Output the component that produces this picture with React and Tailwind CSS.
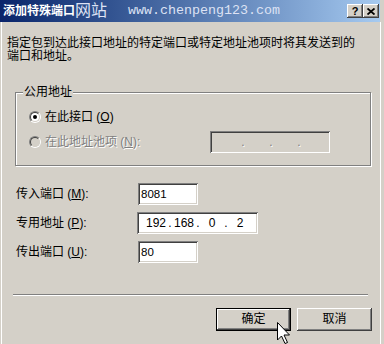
import React from 'react';

const raised =
  'shadow-[inset_-1px_-1px_0_#404040,inset_1px_1px_0_#ffffff,inset_-2px_-2px_0_#808080,inset_2px_2px_0_#d4d0c8]';
const sunken =
  'shadow-[inset_1px_1px_0_#808080,inset_-1px_-1px_0_#ffffff,inset_2px_2px_0_#404040,inset_-2px_-2px_0_#d4d0c8]';
const disabledText = 'text-[#808080] [text-shadow:1px_1px_0_#ffffff]';

function Radio({ checked, disabled }) {
  return (
    <div className="w-[12px] h-[12px] rounded-full border border-t-[#808080] border-l-[#808080] border-b-white border-r-white shrink-0">
      <div
        className={`w-full h-full rounded-full border border-t-[#404040] border-l-[#404040] border-b-[#d4d0c8] border-r-[#d4d0c8] flex items-center justify-center ${
          disabled ? 'bg-[#d4d0c8]' : 'bg-white'
        }`}
      >
        {checked && <div className="w-[4px] h-[4px] rounded-full bg-black" />}
      </div>
    </div>
  );
}

function IpField({ values, disabled, width }) {
  const parts = values || ['', '', '', ''];
  return (
    <div
      className={`h-[22px] ${sunken} ${disabled ? 'bg-[#d4d0c8]' : 'bg-white'} flex items-center pl-[7px]`}
      style={{ width }}
    >
      {parts.map((p, i) => (
        <React.Fragment key={i}>
          <span className={`w-[24px] text-center ${disabled ? disabledText : ''}`}>{p}</span>
          {i < 3 && (
            <span className={`w-[4px] text-center ${disabled ? disabledText : ''}`}>.</span>
          )}
        </React.Fragment>
      ))}
    </div>
  );
}

function FieldRow({ label, accel, children }) {
  return (
    <div className="flex items-center">
      <div className="w-[122px] ml-[9px]">
        {label} (<u>{accel}</u>):
      </div>
      {children}
    </div>
  );
}

export default function App() {
  return (
    <div
      className="w-[384px] h-[344px] overflow-hidden bg-[#d4d0c8] flex flex-col relative text-[12px] leading-[13px] text-black"
      style={{ fontFamily: '"Liberation Sans", "Noto Sans CJK SC", sans-serif' }}
    >
      {/* title bar */}
      <div className="h-[22px] w-[380px] bg-gradient-to-r from-[#0a246a] to-[#a6caf0] flex items-center relative shrink-0">
        <span className="ml-[3px] text-white font-bold text-[12px]">添加特殊端口</span>
        <span className="absolute left-[75px] top-[2px] text-[16px] leading-[18px] text-[#dde2f4]">网站</span>
        <span
          className="absolute left-[128px] top-[3px] text-[13.33px] leading-[16px] text-[#dde2f4]"
          style={{ fontFamily: '"Liberation Mono", monospace' }}
        >
          www.chenpeng123.com
        </span>
        <div className="ml-auto mr-[1px] flex">
          <div className={`w-[16px] h-[14px] bg-[#d4d0c8] ${raised} flex items-center justify-center text-[11px] font-bold leading-none`}>
            ?
          </div>
          <div className={`w-[16px] h-[14px] bg-[#d4d0c8] ${raised} flex items-center justify-center`}>
            <svg width="8" height="7" viewBox="0 0 8 7">
              <path d="M0.5 0.5 L7.5 6.5 M7.5 0.5 L0.5 6.5" stroke="#000" strokeWidth="1.8" />
            </svg>
          </div>
        </div>
      </div>

      {/* body */}
      <div className="flex-1 flex flex-col pl-[7px] shadow-[inset_1px_0_0_#d4d0c8,inset_2px_0_0_#ffffff,inset_-3px_0_0_#d4d0c8,inset_-4px_0_0_#ffffff]">
        <p className="mt-[15px] w-[356px]">
          指定包到达此接口地址的特定端口或特定地址池项时将其发送到的端口和地址。
        </p>

        {/* group box */}
        <div className="relative mt-[29px] ml-[8px] w-[356px] h-[74px] border border-[#808080] shadow-[inset_1px_1px_0_#ffffff,1px_1px_0_#ffffff] pl-[13px] pt-[16px] flex flex-col">
          <span className="absolute left-[7px] -top-[7px] bg-[#d4d0c8] px-[1px]">公用地址</span>
          <div className="flex items-center h-[16px]">
            <Radio checked />
            <span className="ml-[4px]">
              在此接口 (<u>O</u>)
            </span>
          </div>
          <div className="flex items-center h-[22px] mt-[6px]">
            <Radio disabled />
            <span className={`ml-[4px] w-[165px] ${disabledText}`}>
              在此地址池项 (<u>N</u>):
            </span>
            <IpField disabled width={120} />
          </div>
        </div>

        {/* port fields */}
        <div className="flex flex-col gap-[7px] mt-[17px]">
          <FieldRow label="传入端口" accel="M">
            <div className={`w-[60px] h-[22px] bg-white ${sunken} flex items-center pl-[3px] text-[11.5px]`}>8081</div>
          </FieldRow>
          <FieldRow label="专用地址" accel="P">
            <div className="-ml-[1px] text-[12px]">
              <IpField values={['192', '168', '0', '2']} width={121} />
            </div>
          </FieldRow>
          <FieldRow label="传出端口" accel="U">
            <div className={`w-[60px] h-[22px] bg-white ${sunken} flex items-center pl-[3px] text-[11.5px]`}>80</div>
          </FieldRow>
        </div>

        {/* separator */}
        <div className="mt-[31px] ml-[6px] w-[355px] h-[2px] border-t border-t-[#808080] border-b border-b-white" />

        {/* buttons */}
        <div className="flex mt-[12px] ml-[209px] gap-[6px]">
          <div className="w-[75px] h-[23px] border border-black">
            <div className={`w-full h-full ${raised} flex items-center justify-center`}>确定</div>
          </div>
          <div className={`w-[75px] h-[23px] ${raised} flex items-center justify-center`}>取消</div>
        </div>
      </div>

      {/* mouse pointer */}
      <svg className="absolute left-[277px] top-[322px]" width="14" height="23" viewBox="0 0 14 23">
        <path d="M0.5 0.5 L0.5 18 L4.5 14 L8 21.5 L10.5 20.5 L7 13 L12.5 13 Z" fill="#fff" stroke="#000" strokeWidth="1" />
      </svg>
    </div>
  );
}
